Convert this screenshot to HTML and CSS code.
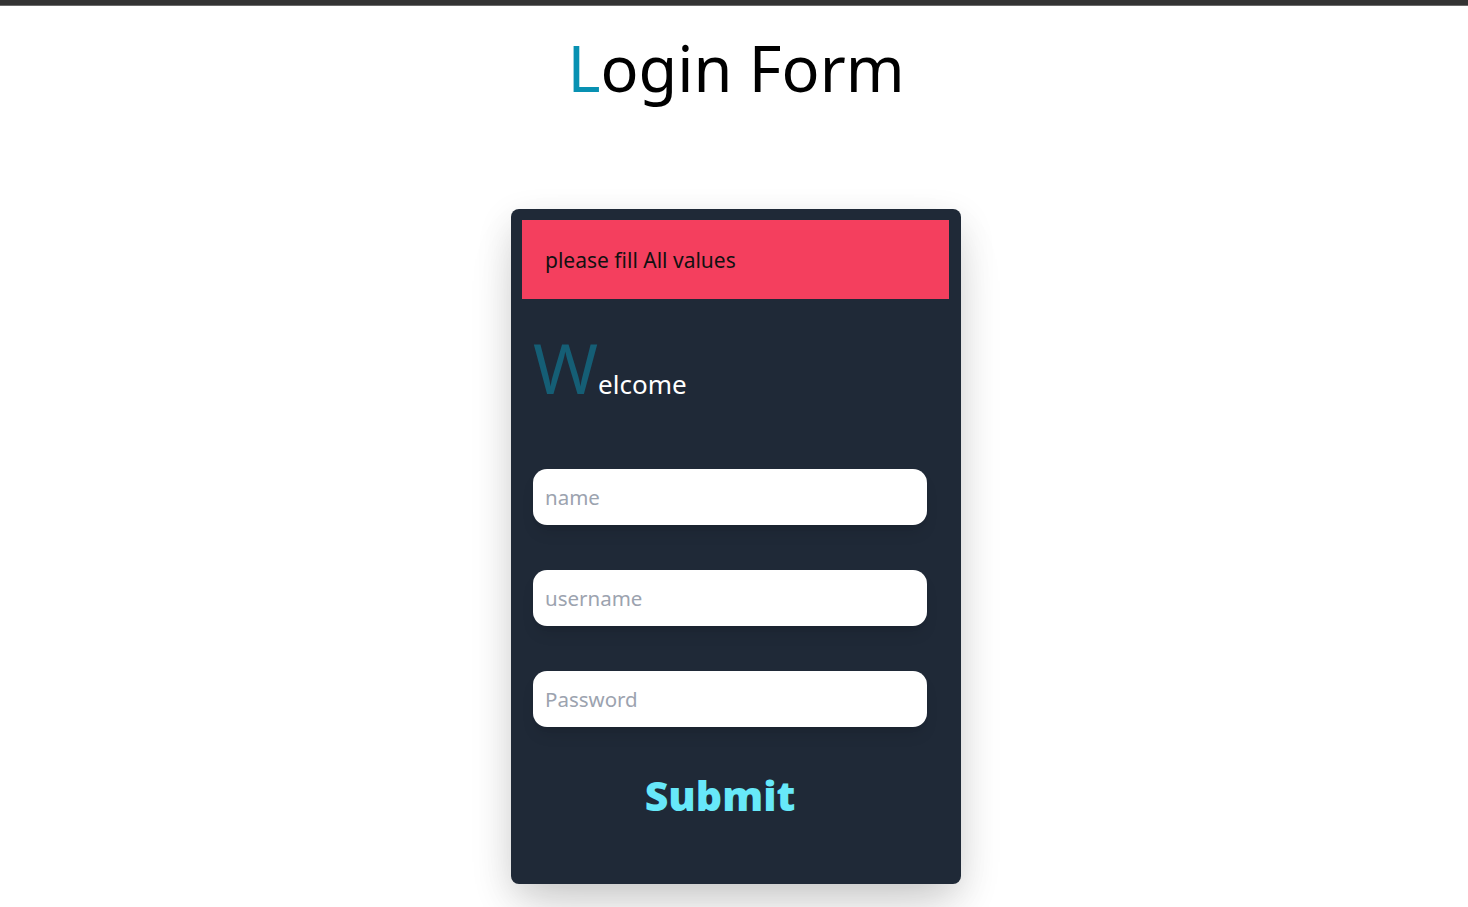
FILE: index.html
```html
<!DOCTYPE html>
<html lang="en">
<head>
<meta charset="utf-8">
<title>Login Form</title>
<link rel="stylesheet" href="styles.css">
</head>
<body>
<div class="topbar"></div>
<main class="page">
  <h1 class="title"><span class="title-first">L</span>ogin Form</h1>
  <div class="card">
    <div class="alert">please fill All values</div>
    <form class="form">
      <h2 class="welcome"><span class="welcome-first">W</span>elcome</h2>
      <input class="field" type="text" placeholder="name">
      <input class="field" type="text" placeholder="username">
      <input class="field" type="password" placeholder="Password">
      <div class="actions">
        <button class="submit" type="button">Submit</button>
      </div>
    </form>
  </div>
</main>
</body>
</html>
```

FILE: styles.css
```css
* { box-sizing: border-box; }
html, body { margin: 0; padding: 0; background: #fff; }
body { font-family: "Noto Sans", "Open Sans", sans-serif; color: #000; min-height: 907px; }

.topbar {
  height: 6px;
  background: #333;
  border-bottom: 1px solid #6a6a6a;
}

.page {
  display: flex;
  flex-direction: column;
  align-items: center;
  padding-left: 4px;
}

.title {
  margin: 18px 0 0;
  font-weight: 400;
  font-size: 63px;
  line-height: 88px;
  letter-spacing: 0;
}
.title-first { color: #0891b2; }

.card {
  margin-top: 97px;
  width: 450px;
  height: 675px;
  background: #1f2937;
  border-radius: 8px;
  padding: 11px 12px 11px 11px;
  box-shadow: 0 12px 36px rgba(0,0,0,0.12), 0 25px 50px -12px rgba(0,0,0,0.15);
}

.alert {
  height: 79px;
  background: #f43f5e;
  color: #111;
  font-size: 21px;
  padding-left: 23px;
  display: flex;
  align-items: center;
}

.form {
  padding: 0 11px;
  display: flex;
  flex-direction: column;
}

.welcome {
  margin: 28px 0 0;
  font-weight: 400;
  color: #fff;
  font-size: 26px;
  line-height: 80px;
  height: 80px;
  display: flex;
  align-items: baseline;
}
.welcome-first {
  color: #155e75;
  font-size: 70px;
}

.field {
  width: 394px;
  height: 56px;
  border: none;
  outline: none;
  border-radius: 14px;
  background: #fff;
  padding: 0 12px;
  font-family: inherit;
  font-size: 20.5px;
  color: #111;
  box-shadow: 0 10px 15px -3px rgba(0,0,0,0.1), 0 4px 6px -4px rgba(0,0,0,0.1);
  margin-top: 45px;
}
.field:first-of-type { margin-top: 62px; }
.field::placeholder { color: #9ca3af; }

.actions {
  width: 394px;
  display: flex;
  justify-content: center;
  margin-top: 40px;
  padding-right: 20px;
}

.submit {
  background: none;
  border: none;
  padding: 0;
  color: #67e8f9;
  font-family: inherit;
  font-weight: 900;
  font-size: 41px;
  line-height: 56px;
  cursor: pointer;
}
```
